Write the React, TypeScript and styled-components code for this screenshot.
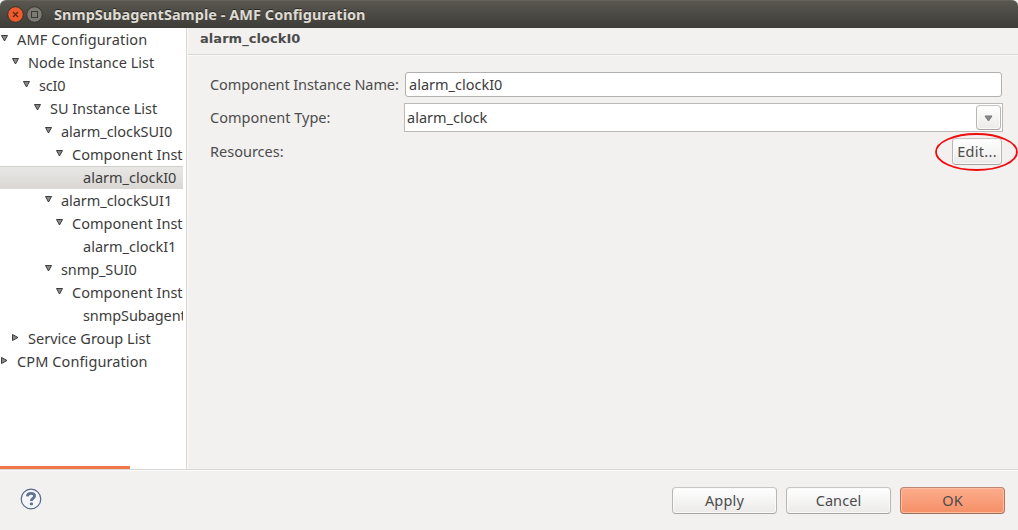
import React from "react";
import styled, { createGlobalStyle, css } from "styled-components";

const GlobalStyle = createGlobalStyle`
  * { box-sizing: border-box; }
  html, body { margin: 0; padding: 0; background: #fff; }
  body { overflow: hidden; }
`;

const Window = styled.div`
  width: 1018px;
  height: 530px;
  display: flex;
  flex-direction: column;
  background: #f2f1f0;
  color: #4c4c4c;
  font-family: "Noto Sans", "Open Sans", sans-serif;
  font-size: 14.5px;
  overflow: hidden;
`;

const TitleBar = styled.header`
  height: 28px;
  flex: none;
  display: flex;
  align-items: center;
  padding-left: 7px;
  border-radius: 6px 6px 0 0;
  border-top: 1px solid #64625b;
  background: linear-gradient(#595750, #3d3c37);
`;

const Title = styled.h1`
  margin: 0 0 0 9px;
  padding-bottom: 2px;
  font-size: 14.5px;
  line-height: 20px;
  font-weight: 700;
  letter-spacing: 0.03px;
  color: #dfdbd2;
  white-space: nowrap;
  text-shadow: 0 -1px 0 #2b2a27;
`;

const WindowIcon = styled.svg`
  display: block;
  width: 17px;
  height: 17px;
  margin-right: 2px;
`;

const Body = styled.div`
  height: 441px;
  flex: none;
  display: flex;
`;

const Sidebar = styled.nav`
  width: 187px;
  flex: none;
  display: flex;
  flex-direction: column;
  justify-content: space-between;
  background: #fff;
  border-right: 1px solid #d9d7d5;
`;

const Tree = styled.ul`
  width: 183px;
  margin: 0;
  padding: 0;
  list-style: none;
  overflow: hidden;
`;

const TreeRow = styled.li<{ $level: number; $selected?: boolean }>`
  height: 23px;
  display: flex;
  align-items: center;
  padding-left: ${(p) => p.$level * 11}px;
  white-space: nowrap;
  color: #3c3c3c;
  ${(p) =>
    p.$selected &&
    css`
      box-shadow: inset 0 1px 0 #d0cecb;
      background: linear-gradient(#e9e8e6, #dad7d4);
    `}
`;

const Arrow = styled.svg`
  width: 17px;
  height: 9px;
  flex: none;
  margin-bottom: 2px;
`;

const Text = styled.span<{ $spacing?: number }>`
  padding-bottom: 2px;
  line-height: 20px;
  white-space: nowrap;
  letter-spacing: ${(p) => p.$spacing ?? 0}px;
`;

const ScrollThumb = styled.div`
  width: 130px;
  height: 3px;
  background: #f07746;
`;

const Main = styled.main`
  flex: 1;
  display: flex;
  flex-direction: column;
  border-left: 1px solid #f8f8f7;
`;

const Heading = styled.h2`
  height: 27px;
  margin: 0;
  padding: 1px 0 0 12px;
  border-bottom: 1px solid #d9d7d5;
  box-shadow: 0 1px 0 #fafafa;
  font-family: "DejaVu Sans", sans-serif;
  font-size: 13px;
  line-height: 19px;
  font-weight: 700;
  letter-spacing: 0.05px;
`;

const Form = styled.div`
  display: grid;
  grid-template-columns: 194px 599px;
  grid-template-rows: 25px 29px 28px;
  row-gap: 6px;
  align-items: center;
  padding: 17px 0 0 22px;
`;

const Input = styled.div`
  height: 25px;
  display: flex;
  align-items: center;
  margin: 0 1px;
  padding: 1px 3px 0;
  border: 1px solid #b2afac;
  border-radius: 3px;
  background: #fff;
  color: #3c3c3c;
`;

const Combo = styled.div`
  height: 29px;
  display: flex;
  align-items: center;
  justify-content: space-between;
  padding: 0 1px 0 2px;
  border: 1px solid #bdbab6;
  background: #fff;
  color: #3c3c3c;
`;

const Button = styled.button<{ $width: number; $height?: number; $primary?: boolean }>`
  width: ${(p) => p.$width}px;
  height: ${(p) => p.$height ?? 27}px;
  display: flex;
  align-items: center;
  justify-content: center;
  padding: 1px 0 0;
  border: 1px solid ${(p) => (p.$primary ? "#ae7861" : "#b9b6b2")};
  border-top-color: ${(p) => (p.$primary ? "#bb8a75" : "#c8c6c3")};
  border-bottom-color: ${(p) => (p.$primary ? "#a16e58" : "#a6a4a1")};
  border-radius: 4px;
  background: ${(p) => (p.$primary ? "linear-gradient(#fdac8c, #f58f67)" : "linear-gradient(#fff, #ebeae9)")};
  box-shadow: inset 0 0 0 1px ${(p) => (p.$primary ? "#ffbb9f" : "#fafafa")};
  color: #4c4c4c;
  font: inherit;
`;

const EditCell = styled.div`
  position: relative;
  justify-self: end;
  align-self: start;
  margin-right: 1px;
`;

const Highlight = styled.svg`
  position: absolute;
  left: -18px;
  top: -6px;
  width: 84px;
  height: 40px;
  pointer-events: none;
`;

const Footer = styled.footer`
  flex: 1;
  display: flex;
  align-items: center;
  gap: 9px;
  padding: 0 13px 0 20px;
  border-top: 1px solid #d9d7d5;
  box-shadow: inset 0 1px 0 #fafafa;
`;

const HelpIcon = styled.svg`
  width: 22px;
  height: 22px;
  margin-right: auto;
  position: relative;
  top: -1px;
`;

type Node = { label: string; level: number; state?: "open" | "closed"; selected?: boolean; spacing?: number };

const nodes: Node[] = [
  { label: "AMF Configuration", level: 0, state: "open", spacing: 0.15 },
  { label: "Node Instance List", level: 1, state: "open" },
  { label: "scI0", level: 2, state: "open", spacing: -0.2 },
  { label: "SU Instance List", level: 3, state: "open", spacing: -0.05 },
  { label: "alarm_clockSUI0", level: 4, state: "open", spacing: -0.05 },
  { label: "Component Instance List", level: 5, state: "open", spacing: 0.02 },
  { label: "alarm_clockI0", level: 6, selected: true },
  { label: "alarm_clockSUI1", level: 4, state: "open", spacing: -0.05 },
  { label: "Component Instance List", level: 5, state: "open", spacing: 0.02 },
  { label: "alarm_clockI1", level: 6 },
  { label: "snmp_SUI0", level: 4, state: "open", spacing: -0.1 },
  { label: "Component Instance List", level: 5, state: "open", spacing: 0.02 },
  { label: "snmpSubagentI0", level: 6, spacing: -0.08 },
  { label: "Service Group List", level: 1, state: "closed", spacing: 0.02 },
  { label: "CPM Configuration", level: 0, state: "closed", spacing: 0.1 },
];

function Expander({ state }: { state?: "open" | "closed" }) {
  return (
    <Arrow viewBox="0 0 17 9">
      {state === "open" && <path d="M1.5 1.5h6L4.5 7z" fill="#8a8a8a" stroke="#3c3c3c" />}
      {state === "closed" && <path d="M1.5 1.5v6L7 4.5z" fill="#8a8a8a" stroke="#3c3c3c" />}
    </Arrow>
  );
}

export default function App() {
  return (
    <>
      <GlobalStyle />
      <Window>
        <TitleBar>
          <WindowIcon viewBox="0 0 17 17">
            <circle cx="8.5" cy="8.5" r="7.8" fill="#ee5b2d" stroke="#35332f" />
            <path d="M6 6l5 5M11 6l-5 5" stroke="#5b2412" strokeWidth="1.2" />
          </WindowIcon>
          <WindowIcon viewBox="0 0 17 17">
            <circle cx="8.5" cy="8.5" r="7.8" fill="#7c7a72" stroke="#35332f" />
            <rect x="5.5" y="5.5" width="6" height="6" fill="none" stroke="#3b3a35" />
          </WindowIcon>
          <Title>SnmpSubagentSample - AMF Configuration</Title>
        </TitleBar>
        <Body>
          <Sidebar>
            <Tree>
              {nodes.map((n, i) => (
                <TreeRow key={i} $level={n.level} $selected={n.selected}>
                  <Expander state={n.state} />
                  <Text $spacing={n.spacing}>{n.label}</Text>
                </TreeRow>
              ))}
            </Tree>
            <ScrollThumb />
          </Sidebar>
          <Main>
            <Heading>alarm_clockI0</Heading>
            <Form>
              <Text $spacing={-0.1}>Component Instance Name:</Text>
              <Input><Text>alarm_clockI0</Text></Input>
              <Text>Component Type:</Text>
              <Combo>
                <Text>alarm_clock</Text>
                <Button $width={25} $height={25} aria-label="Open list">
                  <svg width="9" height="7" viewBox="0 0 9 7"><path d="M1 1h7L4.5 6z" fill="#8a8a8a" stroke="#777" /></svg>
                </Button>
              </Combo>
              <Text>Resources:</Text>
              <EditCell>
                <Button $width={50}><Text $spacing={0.3}>Edit...</Text></Button>
                <Highlight viewBox="0 0 84 40">
                  <ellipse cx="42.5" cy="20" rx="40.5" ry="18" fill="none" stroke="#f00c0c" strokeWidth="1.8" />
                </Highlight>
              </EditCell>
            </Form>
          </Main>
        </Body>
        <Footer>
          <HelpIcon viewBox="0 0 22 22">
            <circle cx="11" cy="11" r="9.8" fill="#f5f6f8" stroke="#546789" strokeWidth="1.2" />
            <path d="M7.3 8.4C7.5 6 9.2 5.3 11 5.3c2.2 0 3.6 1 3.6 2.7 0 2.4-3.3 2.4-3.3 5" fill="none" stroke="#5f7396" strokeWidth="2.8" />
            <rect x="9.8" y="14.5" width="3.2" height="2.8" rx="1" fill="#5f7396" />
          </HelpIcon>
          <Button $width={105}><Text $spacing={0.2}>Apply</Text></Button>
          <Button $width={105}><Text $spacing={0.1}>Cancel</Text></Button>
          <Button $width={105} $primary><Text>OK</Text></Button>
        </Footer>
      </Window>
    </>
  );
}
